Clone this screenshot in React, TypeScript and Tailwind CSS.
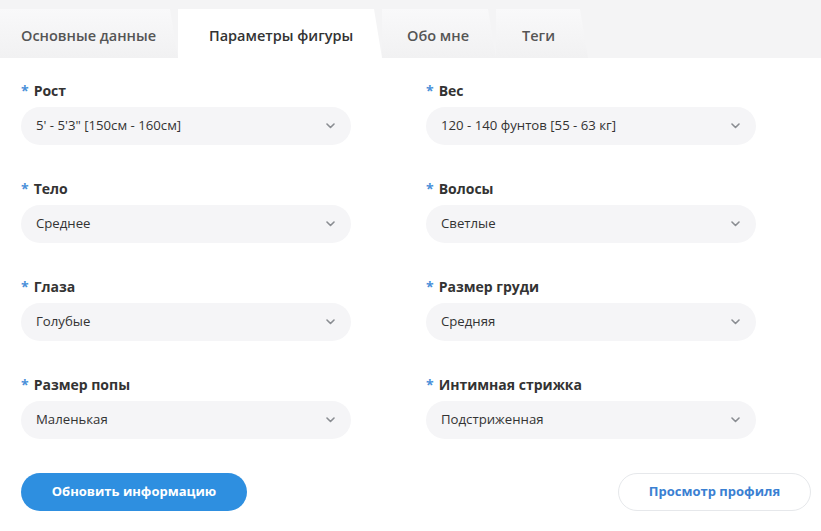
import React from "react";

/* ── Data ─────────────────────────────── */
const tabs = [
  { label: "Основные данные", active: false, cls: "w-[178px] pl-[21px]" },
  { label: "Параметры фигуры", active: true, cls: "w-[204px] pl-[31px]" },
  { label: "Обо мне", active: false, cls: "w-[114px] pl-[25px]" },
  { label: "Теги", active: false, cls: "w-[92px] pl-[26px]" },
];

const fields = [
  { label: "Рост", value: "5' - 5'3\" [150см - 160см]" },
  { label: "Вес", value: "120 - 140 фунтов [55 - 63 кг]" },
  { label: "Тело", value: "Среднее" },
  { label: "Волосы", value: "Светлые" },
  { label: "Глаза", value: "Голубые" },
  { label: "Размер груди", value: "Средняя" },
  { label: "Размер попы", value: "Маленькая" },
  { label: "Интимная стрижка", value: "Подстриженная" },
];

const Chevron = () => (
  <svg width="9" height="6" viewBox="0 0 9 6" fill="none">
    <path d="M1 1l3.5 3.5L8 1" stroke="#8a8d92" strokeWidth="1.6" strokeLinecap="round" strokeLinejoin="round" />
  </svg>
);

/* ── Field ─────────────────────────────── */
const Field = ({ label, value }: { label: string; value: string }) => (
  <div className="flex flex-col">
    <div className="flex items-center gap-[5px] h-[22px] text-[14px] font-bold text-[#333]">
      <span className="text-[#4a90d9]">*</span>
      {label}
    </div>
    <div className="mt-[6px] h-[38px] w-[330px] rounded-full bg-[#f5f5f7] flex items-center justify-between pl-[15px] pr-[16px] text-[13.2px] text-[#333]">
      <span>{value}</span>
      <Chevron />
    </div>
  </div>
);

export default function App() {
  return (
    <div className="w-[821px] h-[531px] bg-white overflow-hidden" style={{ fontFamily: "'Open Sans', sans-serif" }}>
      {/* Tabs */}
      <div className="h-[58px] bg-[#f4f4f5] flex items-end">
        {tabs.map((t) => (
          <div
            key={t.label}
            className={`${t.cls} h-[49px] pt-[4px] flex items-center text-[14.5px] font-semibold whitespace-nowrap [clip-path:polygon(0_0,calc(100%-8px)_0,100%_100%,0_100%)] ${
              t.active
                ? "bg-white text-[#333]"
                : "bg-gradient-to-b from-[#f9f9fa] to-[#f1f1f2] text-[#555]"
            }`}
          >
            {t.label}
          </div>
        ))}
      </div>

      {/* Form */}
      <div className="pl-[21px] pt-[21px] grid grid-cols-[330px_330px] gap-x-[75px] gap-y-[32px]">
        {fields.map((f) => (
          <Field key={f.label} label={f.label} value={f.value} />
        ))}
      </div>

      {/* Actions */}
      <div className="mt-[34px] pl-[21px] pr-[10px] flex items-center justify-between">
        <button className="h-[38px] w-[226px] rounded-full bg-[#2e8fe0] text-white text-[13px] font-bold">
          Обновить информацию
        </button>
        <button className="h-[38px] w-[193px] rounded-full border border-[#e6e8eb] bg-white text-[#3a80d2] text-[13px] font-bold">
          Просмотр профиля
        </button>
      </div>
    </div>
  );
}
